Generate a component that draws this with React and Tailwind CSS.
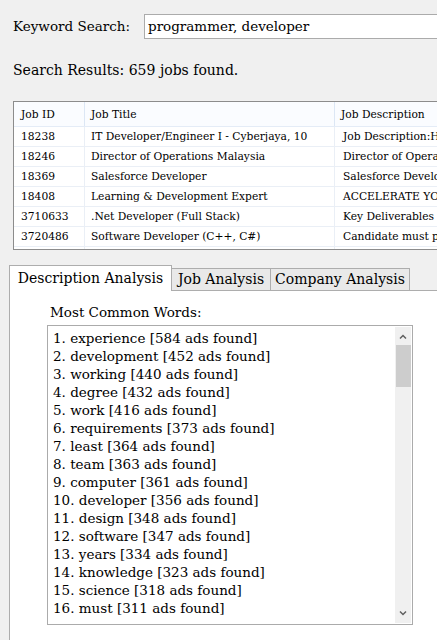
import React from "react";

const rows = [
  ["18238", "IT Developer/Engineer I - Cyberjaya, 10", "Job Description:Have a passion"],
  ["18246", "Director of Operations Malaysia", "Director of Operations Malaysia"],
  ["18369", "Salesforce Developer", "Salesforce Developer needed"],
  ["18408", "Learning & Development Expert", "ACCELERATE YOUR CAREER"],
  ["3710633", ".Net Developer (Full Stack)", "Key Deliverables for this role"],
  ["3720486", "Software Developer (C++, C#)", "Candidate must possess"],
  ["3720501", "Web Developer", "Responsibilities"],
];

const words = [
  "1. experience [584 ads found]",
  "2. development [452 ads found]",
  "3. working [440 ads found]",
  "4. degree [432 ads found]",
  "5. work [416 ads found]",
  "6. requirements [373 ads found]",
  "7. least [364 ads found]",
  "8. team [363 ads found]",
  "9. computer [361 ads found]",
  "10. developer [356 ads found]",
  "11. design [348 ads found]",
  "12. software [347 ads found]",
  "13. years [334 ads found]",
  "14. knowledge [323 ads found]",
  "15. science [318 ads found]",
  "16. must [311 ads found]",
];

export default function App() {
  return (
    <div
      className="w-[437px] h-[640px] overflow-hidden bg-[#f0f0f0] text-[#000] whitespace-nowrap"
      style={{ fontFamily: '"DejaVu Serif", "Liberation Serif", serif' }}
    >
      <div className="flex items-center pt-[14px] pl-[13px]">
        <span className="text-[13.5px] w-[131px] shrink-0">Keyword Search:</span>
        <div className="w-[320px] h-[25px] shrink-0 bg-white border border-[#ababab] flex items-center pl-[3px] text-[13.5px]">
          programmer, developer
        </div>
      </div>
      <div className="pl-[13px] mt-[22px] text-[14px] leading-[18px]">
        Search Results: 659 jobs found.
      </div>

      <div className="ml-[13px] mt-[22px] w-[440px] h-[149px] border border-[#8c8c8c] bg-white overflow-hidden text-[10.7px]">
        <div className="flex h-[25px] bg-[#fafcff] border-b border-[#e4ecf7]">
          <div className="w-[71px] shrink-0 pl-[7px] pt-[3px] flex items-center border-r border-[#dce7f5]">Job ID</div>
          <div className="w-[250px] shrink-0 pl-[6px] pt-[3px] flex items-center border-r border-[#dce7f5]">Job Title</div>
          <div className="w-[200px] shrink-0 pl-[6px] pt-[3px] flex items-center">Job Description</div>
        </div>
        {rows.map((r) => (
          <div key={r[0]} className="flex h-[20px] border-b border-[#eaeff6]">
            <div className="w-[71px] shrink-0 pl-[7px] pt-[1px] flex items-center border-r border-[#eaeff6]">{r[0]}</div>
            <div className="w-[250px] shrink-0 pl-[6px] pt-[1px] flex items-center border-r border-[#eaeff6]">{r[1]}</div>
            <div className="w-[200px] shrink-0 pl-[8px] pt-[1px] flex items-center">{r[2]}</div>
          </div>
        ))}
      </div>

      <div className="mt-[15px] ml-[9px] flex items-end h-[25px] relative z-10 text-[14px]">
        <div className="w-[163px] shrink-0 h-[26px] -mb-[1px] bg-white border border-[#adadad] border-b-0 flex items-center justify-center">
          Description Analysis
        </div>
        <div className="w-[99px] shrink-0 h-[22px] bg-[#e9e9e9] border border-[#adadad] border-l-0 border-b-0 flex items-center justify-center">
          Job Analysis
        </div>
        <div className="w-[139px] shrink-0 h-[22px] bg-[#e9e9e9] border border-[#adadad] border-l-0 border-b-0 flex items-center justify-center">
          Company Analysis
        </div>
      </div>
      <div className="ml-[9px] w-[440px] h-[360px] bg-white border-l border-t border-[#adadad] pt-[12px] pl-[37px]">
        <div className="ml-[3px] text-[13.5px] leading-[18px]">Most Common Words:</div>
        <div className="mt-[4px] w-[366px] h-[300px] border border-[#ababab] flex">
          <div className="flex-1 pl-[5px] pt-[3px] overflow-hidden text-[13.5px] leading-[18px]">
            {words.map((w) => (
              <div key={w}>{w}</div>
            ))}
          </div>
          <div className="w-[16px] shrink-0 mr-[1px] my-[1px] bg-[#f0f0f0] flex flex-col items-center">
            <svg width="16" height="16" viewBox="0 0 16 16" className="mt-[2px]">
              <path d="M5 9.5 L8 6.5 L11 9.5" fill="none" stroke="#606060" strokeWidth="1.5" />
            </svg>
            <div className="w-[15px] h-[42px] bg-[#cdcdcd]" />
            <div className="flex-1" />
            <svg width="16" height="16" viewBox="0 0 16 16" className="mb-[2px]">
              <path d="M5 6.5 L8 9.5 L11 6.5" fill="none" stroke="#606060" strokeWidth="1.5" />
            </svg>
          </div>
        </div>
      </div>
    </div>
  );
}
